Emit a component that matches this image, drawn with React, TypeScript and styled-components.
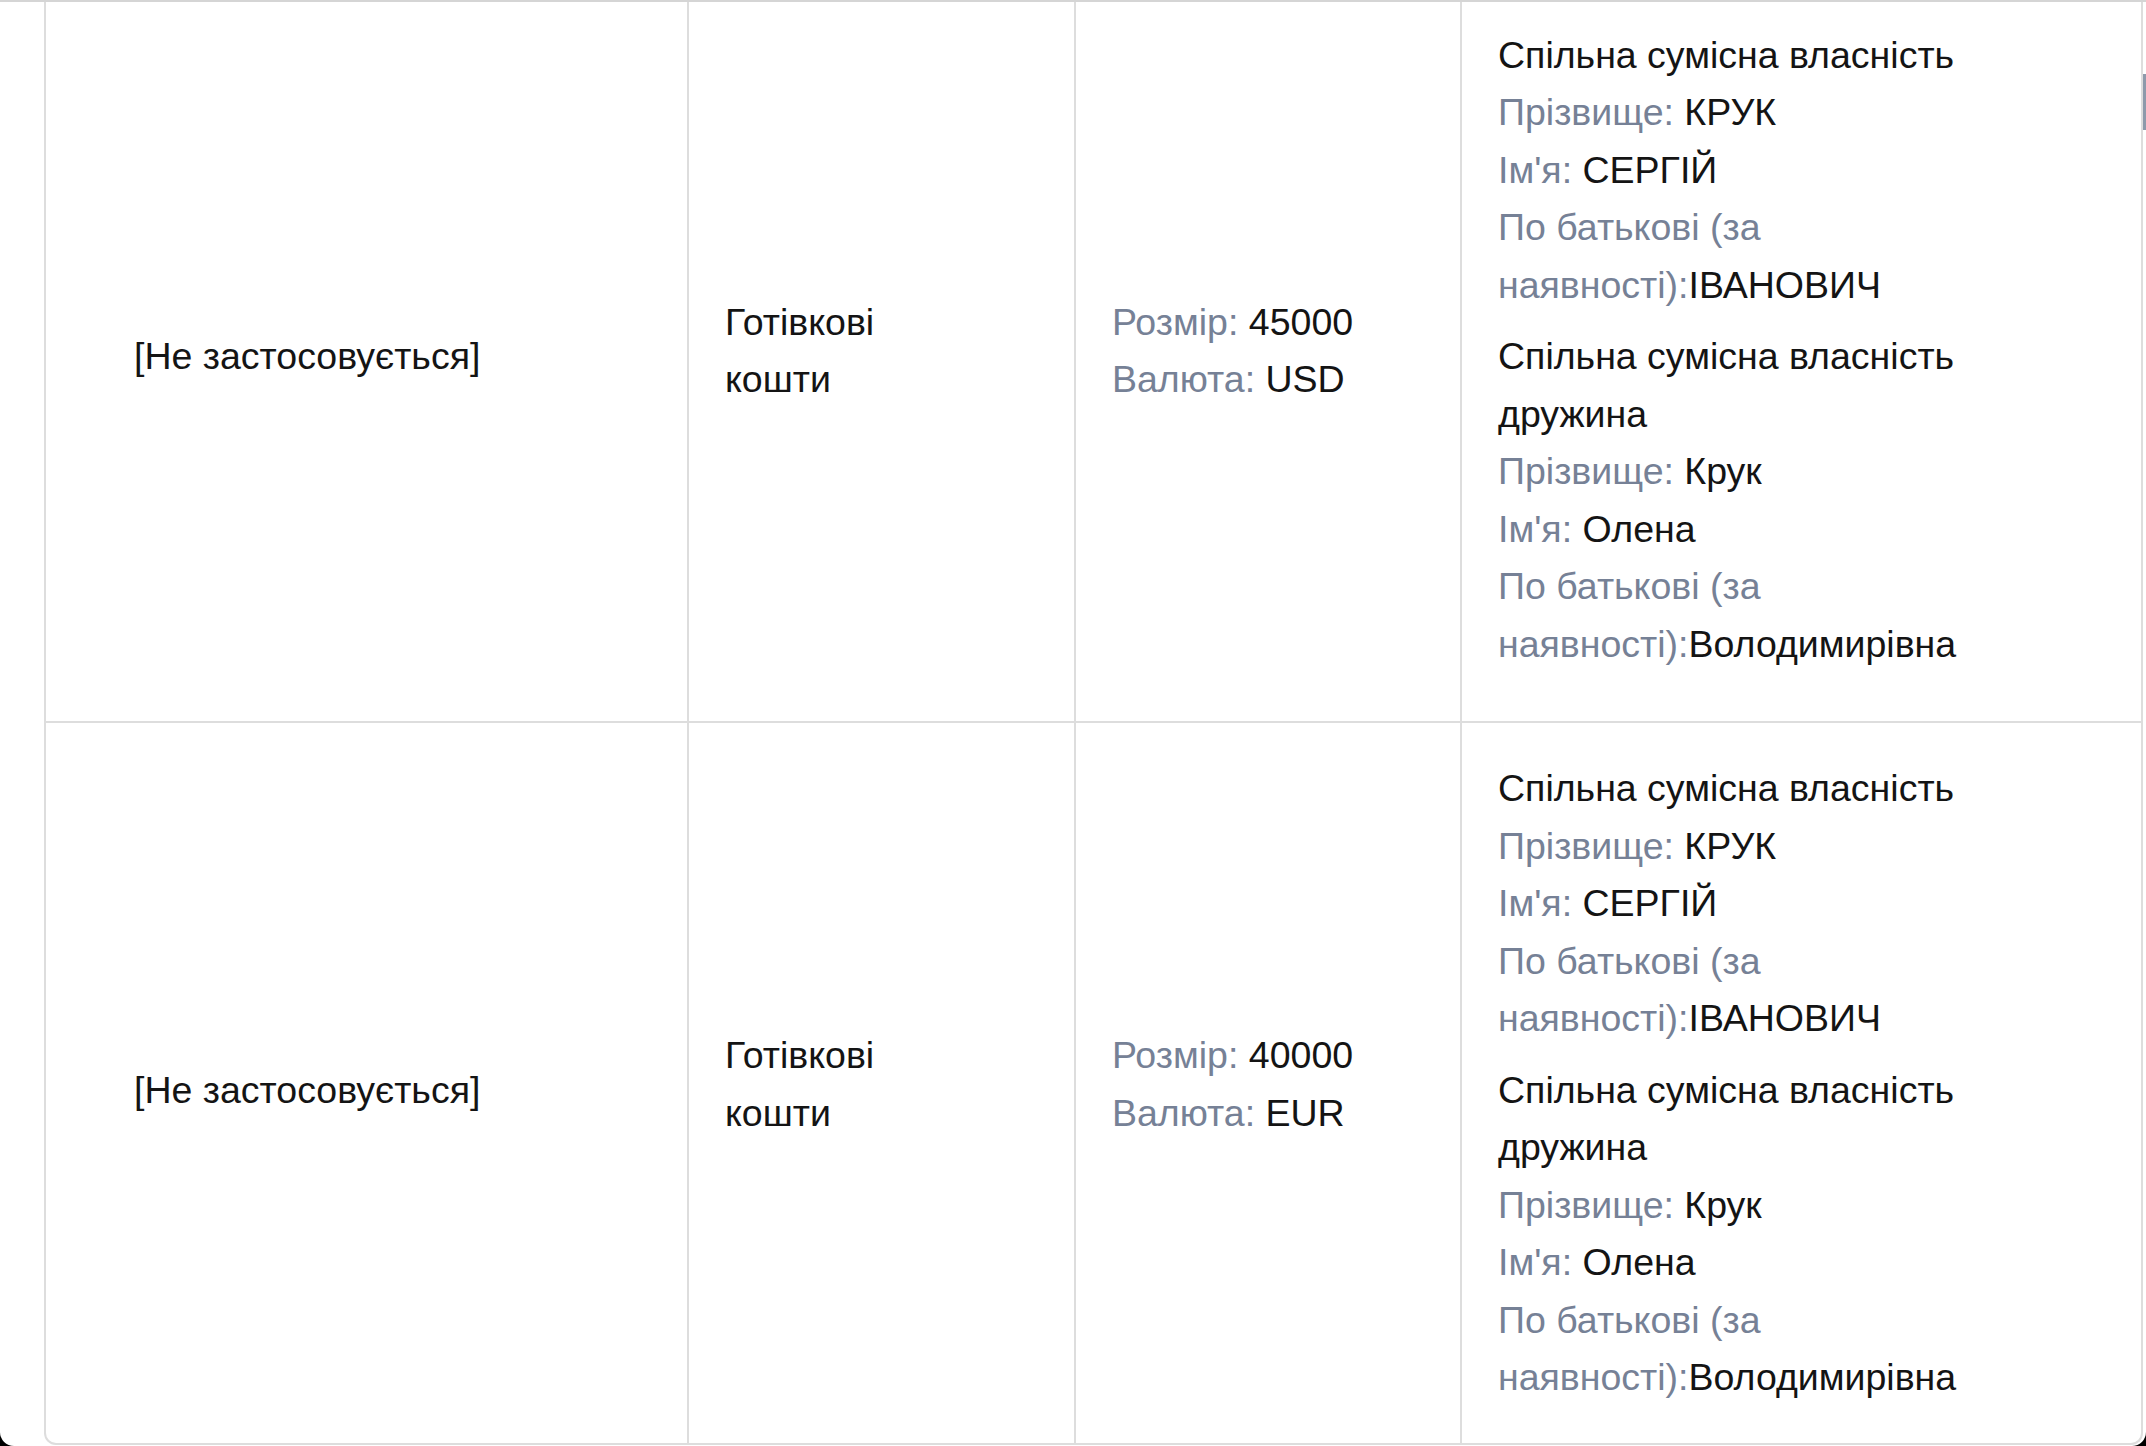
import React from 'react';
import styled, { createGlobalStyle } from 'styled-components';

interface IOwner {
  title: string;
  relation?: string;
  lastName: string;
  firstName: string;
  middleName: string;
}

interface IAsset {
  object: string;
  kind: string;
  size: string;
  currency: string;
  owners: IOwner[];
}

const owners: IOwner[] = [
  {
    title: 'Спільна сумісна власність',
    lastName: 'КРУК',
    firstName: 'СЕРГІЙ',
    middleName: 'ІВАНОВИЧ',
  },
  {
    title: 'Спільна сумісна власність',
    relation: 'дружина',
    lastName: 'Крук',
    firstName: 'Олена',
    middleName: 'Володимирівна',
  },
];

const assets: IAsset[] = [
  { object: '[Не застосовується]', kind: 'Готівкові кошти', size: '45000', currency: 'USD', owners },
  { object: '[Не застосовується]', kind: 'Готівкові кошти', size: '40000', currency: 'EUR', owners },
];

const GlobalStyle = createGlobalStyle`
  html, body {
    margin: 0;
    padding: 0;
    background: #000;
  }

  body {
    font-family: 'Liberation Sans', Arial, 'Noto Sans', sans-serif;
    color: #141414;
  }
`;

// the screenshot is a crop of a window: top row is cut, bottom corners are round
const Viewport = styled.div`
  position: relative;
  width: 2146px;
  height: 1446px;
  box-sizing: border-box;
  overflow: hidden;
  background: #fff;
  border-top: 2px solid #d5d5d5;
  border-radius: 0 0 14px 14px;
`;

const ScrollThumb = styled.div`
  position: absolute;
  top: 72px;
  right: 0;
  width: 3px;
  height: 56px;
  background: #8e9aab;
`;

const Card = styled.div`
  box-sizing: border-box;
  height: 1455px;
  margin: -12.5px 3px 0 44px;
  border: 2px solid #dddddd;
  border-top: none;
  border-radius: 0 0 12px 12px;
  overflow: hidden;
  display: flex;
  flex-direction: column;
`;

const Row = styled.div`
  display: grid;
  grid-template-columns: 643px 387px 386px 1fr;
  border-bottom: 2px solid #dddddd;

  &:last-child {
    border-bottom: none;
  }
`;

// $lead: first column has a wider left inset; $raise: two-line cells sit a bit higher
const Cell = styled.div<{ $lead?: boolean; $raise?: boolean }>`
  box-sizing: border-box;
  display: flex;
  flex-direction: column;
  justify-content: center;
  padding: 37px 36px ${p => (p.$raise ? '45px' : '34px')} ${p => (p.$lead ? '88px' : '36px')};
  border-right: 2px solid #dddddd;
  font-size: 37.5px;
  line-height: 57.5px;

  &:last-child {
    border-right: none;
  }
`;

const Text = styled.div<{ $max?: number }>`
  max-width: ${p => (p.$max ? `${p.$max}px` : 'none')};
`;

const OwnerGroup = styled.div`
  max-width: 560px;
  margin-bottom: 14px;
`;

const Label = styled.span`
  color: #768196;
`;

const Value = styled.span`
  color: #141414;
`;

const Owner = ({ owner }: { owner: IOwner }) => (
  <OwnerGroup>
    <Text>{owner.title}</Text>
    {owner.relation && <Text>{owner.relation}</Text>}
    <Text>
      <Label>Прізвище:</Label> <Value>{owner.lastName}</Value>
    </Text>
    <Text>
      <Label>Ім'я:</Label> <Value>{owner.firstName}</Value>
    </Text>
    <Text>
      <Label>По батькові (за наявності):</Label>
      <Value>{owner.middleName}</Value>
    </Text>
  </OwnerGroup>
);

export default function App() {
  return (
    <>
      <GlobalStyle />
      <Viewport>
        <Card>
          {assets.map((a, i) => (
            <Row key={i}>
              <Cell $lead={true}>
                <Text>{a.object}</Text>
              </Cell>
              <Cell $raise={true}>
                <Text $max={200}>{a.kind}</Text>
              </Cell>
              <Cell $raise={true}>
                <Text>
                  <Label>Розмір:</Label> <Value>{a.size}</Value>
                </Text>
                <Text>
                  <Label>Валюта:</Label> <Value>{a.currency}</Value>
                </Text>
              </Cell>
              <Cell>
                {a.owners.map((o, j) => (
                  <Owner key={j} owner={o} />
                ))}
              </Cell>
            </Row>
          ))}
        </Card>
        <ScrollThumb />
      </Viewport>
    </>
  );
}
